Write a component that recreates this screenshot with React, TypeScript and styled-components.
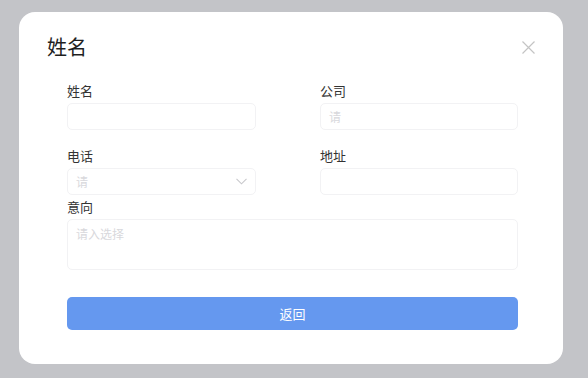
import * as React from 'react'
import styled, { createGlobalStyle } from 'styled-components'

const GlobalStyle = createGlobalStyle`
  html, body {
    margin: 0;
    padding: 0;
    background: #c3c4c8;
    font-family: "Noto Sans CJK SC", "Noto Sans", sans-serif;
  }
`

const Backdrop = styled.div`
  width: 588px;
  height: 378px;
  box-sizing: border-box;
  padding: 12px 25px 14px 19px;
  background: #c3c4c8;
`

const Modal = styled.div`
  width: 544px;
  height: 352px;
  box-sizing: border-box;
  background: #fff;
  border-radius: 16px;
  display: flex;
  flex-direction: column;
`

const Header = styled.div`
  display: flex;
  align-items: center;
  justify-content: space-between;
  padding: 21px 28px 0 28px;
  height: 28px;
`

const Title = styled.div`
  font-size: 20px;
  line-height: 28px;
  color: #1f1f1f;
`

const Close = styled.button`
  border: 0;
  background: none;
  padding: 0;
  width: 13px;
  height: 13px;
  display: flex;
  cursor: pointer;
`

const Form = styled.div`
  padding: 21px 45px 0 48px;
  display: flex;
  flex-direction: column;
`

const Grid = styled.div`
  display: grid;
  grid-template-columns: 189px 198px;
  justify-content: space-between;
  row-gap: 17px;
`

const Field = styled.div<{ $top?: number }>`
  display: flex;
  flex-direction: column;
  gap: 3px;
  margin-top: ${p => p.$top || 0}px;
`

const Label = styled.label`
  font-size: 13px;
  line-height: 18px;
  color: #333;
`

const Input = styled.div<{ $height?: number }>`
  height: ${p => p.$height || 27}px;
  box-sizing: border-box;
  border: 1px solid #f2f2f4;
  border-radius: 5px;
  display: flex;
  align-items: ${p => (p.$height ? 'flex-start' : 'center')};
  justify-content: space-between;
  padding: ${p => (p.$height ? '5px 8px' : '0 8px')};
  font-size: 12px;
  line-height: 18px;
  color: #d8d8dc;
`

const Submit = styled.button`
  margin-top: 27px;
  height: 33px;
  border: 0;
  border-radius: 5px;
  background: #6598ef;
  color: #fff;
  font-family: inherit;
  font-size: 13px;
  cursor: pointer;
`

function XIcon() {
  return (
    <svg width="13" height="13" viewBox="0 0 13 13">
      <path d="M0.5 0.5 L12.5 12.5 M12.5 0.5 L0.5 12.5" stroke="#c4c4c4" strokeWidth="1.2" fill="none" />
    </svg>
  )
}

function Chevron() {
  return (
    <svg width="11" height="7" viewBox="0 0 11 7">
      <path d="M0.5 0.8 L5.5 5.8 L10.5 0.8" stroke="#c8c8cc" strokeWidth="1.1" fill="none" />
    </svg>
  )
}

export default function App() {
  return (
    <>
      <GlobalStyle />
      <Backdrop>
        <Modal>
          <Header>
            <Title>姓名</Title>
            <Close aria-label="close"><XIcon /></Close>
          </Header>
          <Form>
            <Grid>
              <Field>
                <Label>姓名</Label>
                <Input />
              </Field>
              <Field>
                <Label>公司</Label>
                <Input>请</Input>
              </Field>
              <Field>
                <Label>电话</Label>
                <Input>
                  <span>请</span>
                  <Chevron />
                </Input>
              </Field>
              <Field>
                <Label>地址</Label>
                <Input />
              </Field>
            </Grid>
            <Field $top={3}>
              <Label>意向</Label>
              <Input $height={51}>请入选择</Input>
            </Field>
            <Submit>返回</Submit>
          </Form>
        </Modal>
      </Backdrop>
    </>
  )
}
